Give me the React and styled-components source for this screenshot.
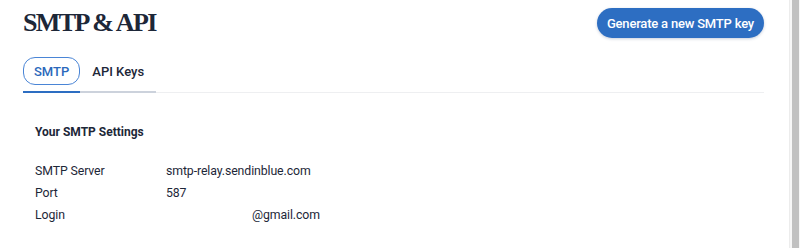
import React from "react";
import styled, { createGlobalStyle } from "styled-components";

const Global = createGlobalStyle`
  html, body { margin: 0; padding: 0; background: #ffffff; }
  body { font-family: Roboto, "Liberation Sans", Arial, sans-serif; color: #1f2a3a; }
  * { box-sizing: border-box; }
`;

const Frame = styled.div`
  display: flex;
  width: 800px;
  height: 248px;
  overflow: hidden;
`;

const Main = styled.main`
  flex: 1;
  padding: 8px 25px 0 23px;
  display: flex;
  flex-direction: column;
`;

const Header = styled.header`
  display: flex;
  align-items: center;
  justify-content: space-between;
  height: 30px;
`;

const Title = styled.h1`
  margin: 0;
  font-family: "Liberation Serif", "Times New Roman", serif;
  font-weight: 700;
  font-size: 26px;
  line-height: 30px;
  letter-spacing: -1.6px;
  color: #1d2738;
`;

const PrimaryButton = styled.button`
  height: 30px;
  padding: 0 10px;
  border: none;
  border-radius: 15px;
  background: #2d6ec2;
  color: #ffffff;
  font-family: Roboto, "Liberation Sans", sans-serif;
  font-weight: 500;
  font-size: 13px;
  letter-spacing: -0.2px;
  box-shadow: 0 1px 3px rgba(30, 60, 110, 0.25);
  cursor: pointer;
`;

const Tabs = styled.nav`
  display: flex;
  margin-top: 19px;
  border-bottom: 1px solid #eeeff1;
`;

const TabItem = styled.div`
  display: flex;
  padding-bottom: 6px;
  margin-bottom: -1px;
  border-bottom: 2px solid ${(p) => (p.$active ? "#2d6ec2" : "#ccd2dc")};
`;

const TabPill = styled.button`
  height: 28px;
  padding: 0 ${(p) => (p.$active ? "10px" : "11px")};
  border: 1.5px solid ${(p) => (p.$active ? "#4a85d6" : "transparent")};
  border-radius: 12px;
  background: transparent;
  color: ${(p) => (p.$active ? "#2b68bb" : "#1d2738")};
  font-family: Roboto, "Liberation Sans", sans-serif;
  font-weight: 500;
  font-size: 13px;
  cursor: pointer;
`;

const Panel = styled.section`
  padding: 31px 12px 0;
`;

const SectionTitle = styled.h2`
  margin: 0 0 20px;
  font-size: 12px;
  font-weight: 700;
  line-height: 16px;
  color: #1d2738;
`;

const SettingRow = styled.div`
  display: grid;
  grid-template-columns: 131px 1fr;
  height: 22px;
  align-items: center;
  font-size: 12.3px;
  letter-spacing: -0.1px;
  color: #1d2738;
`;

const Value = styled.span`
  padding-left: ${(p) => p.$indent || 0}px;
`;

const Scrollbar = styled.div`
  width: 11px;
  border-left: 1px solid #ececec;
  background: #f7f7f7;
  display: flex;
  padding: 0 1px 0 2px;
`;

const Thumb = styled.div`
  flex: 1;
  background: #c1c1c1;
`;

const settings = [
  { label: "SMTP Server", value: "smtp-relay.sendinblue.com" },
  { label: "Port", value: "587" },
  { label: "Login", value: "@gmail.com", indent: 86 },
];

export default function App() {
  return (
    <Frame>
      <Global />
      <Main>
        <Header>
          <Title>SMTP &amp; API</Title>
          <PrimaryButton>Generate a new SMTP key</PrimaryButton>
        </Header>
        <Tabs>
          <TabItem $active>
            <TabPill $active>SMTP</TabPill>
          </TabItem>
          <TabItem>
            <TabPill>API Keys</TabPill>
          </TabItem>
        </Tabs>
        <Panel>
          <SectionTitle>Your SMTP Settings</SectionTitle>
          {settings.map((s) => (
            <SettingRow key={s.label}>
              <span>{s.label}</span>
              <Value $indent={s.indent}>{s.value}</Value>
            </SettingRow>
          ))}
        </Panel>
      </Main>
      <Scrollbar>
        <Thumb />
      </Scrollbar>
    </Frame>
  );
}
